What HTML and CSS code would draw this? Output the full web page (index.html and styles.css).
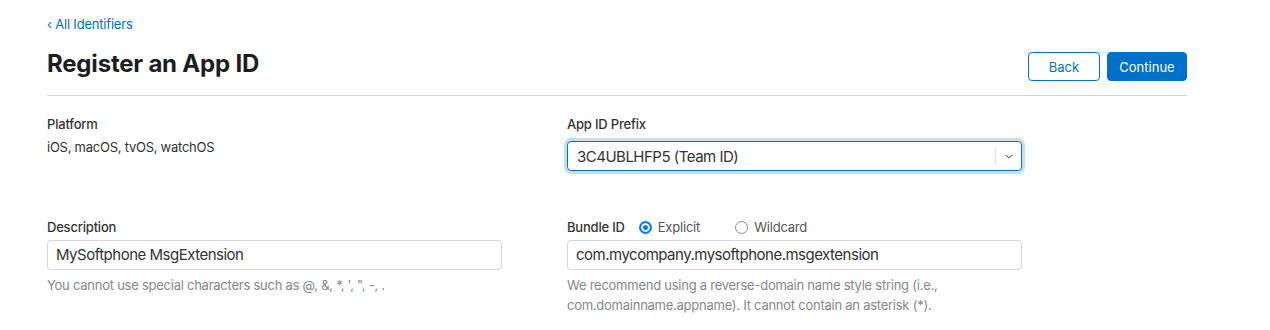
FILE: index.html
```html
<!DOCTYPE html>
<html lang="en">
  <head>
    <meta charset="UTF-8" />
    <meta name="viewport" content="width=device-width, initial-scale=1.0" />
    <title>Register an App ID</title>
    <link rel="stylesheet" href="styles.css">
  </head>
  <body>
    <div class="page">
      <a class="breadcrumb" href="#">&lsaquo; All Identifiers</a>

      <div class="header">
        <h1>Register an App ID</h1>
        <div class="actions">
          <button class="btn btn-secondary">Back</button>
          <button class="btn btn-primary">Continue</button>
        </div>
      </div>

      <div class="form">
        <div class="field">
          <div class="label">Platform</div>
          <div class="value">iOS, macOS, tvOS, watchOS</div>
        </div>
        <div class="field">
          <div class="label">App ID Prefix</div>
          <div class="select">
            <span class="select-text">3C4UBLHFP5 (Team ID)</span>
            <span class="select-sep"></span>
            <svg class="select-arrow" width="8" height="5" viewBox="0 0 8 5">
              <path d="M0.6 0.8 L4 4 L7.4 0.8" fill="none" stroke="#777" stroke-width="1.1"/>
            </svg>
          </div>
        </div>

        <div class="field row2">
          <div class="label">Description</div>
          <div class="input">MySoftphone MsgExtension</div>
          <div class="help">You cannot use special characters such as @, &amp;, *, ', ", -, .</div>
        </div>
        <div class="field row2">
          <div class="label-row">
            <span class="label">Bundle ID</span>
            <label class="radio"><span class="dot checked"></span>Explicit</label>
            <label class="radio"><span class="dot"></span>Wildcard</label>
          </div>
          <div class="input">com.mycompany.mysoftphone.msgextension</div>
          <div class="help">We recommend using a reverse-domain name style string (i.e.,<br>com.domainname.appname). It cannot contain an asterisk (*).</div>
        </div>
      </div>
    </div>
  </body>
</html>
```

FILE: styles.css
```css
body {
  margin: 0;
  padding: 0;
  background-color: #fff;
  font-family: Inter, "Liberation Sans", Arial, sans-serif;
  color: #333;
}

.page {
  width: 1140px;
  padding: 14px 0 0 47px;
}

.breadcrumb {
  display: block;
  font-size: 13px;
  line-height: 20px;
  letter-spacing: -0.2px;
  color: #0070c9;
  text-decoration: none;
}

.header {
  display: flex;
  justify-content: space-between;
  align-items: flex-start;
  margin-top: 14px;
  padding: 4px 0 14px;
  border-bottom: 1px solid #d6d6d6;
}

h1 {
  margin: 0;
  margin-top: -3px;
  font-size: 24px;
  line-height: 30px;
  font-weight: 700;
  letter-spacing: -0.2px;
  color: #1d1d1f;
}

.actions {
  display: flex;
  gap: 7px;
}

.btn {
  height: 29px;
  padding: 0;
  font-family: inherit;
  font-size: 13px;
  border-radius: 4px;
  cursor: pointer;
}

.btn-secondary {
  width: 72px;
  background-color: #fff;
  color: #0070c9;
  border: 1px solid #0070c9;
}

.btn-primary {
  width: 80px;
  background-color: #0070c9;
  color: #fff;
  border: 1px solid #0070c9;
}

.form {
  display: grid;
  grid-template-columns: 520px 1fr;
  row-gap: 46px;
  padding-top: 18px;
}

.label {
  font-size: 13px;
  line-height: 20px;
  font-weight: 500;
  letter-spacing: -0.2px;
  color: #333;
}

.value {
  margin-top: 3px;
  font-size: 13px;
  line-height: 20px;
  letter-spacing: -0.25px;
  color: #333;
}

.select {
  display: flex;
  align-items: center;
  width: 455px;
  height: 30px;
  margin-top: 7px;
  box-sizing: border-box;
  padding: 0 8px 0 9px;
  border: 1px solid #0070c9;
  border-radius: 4px;
  box-shadow: 0 0 0 3px #c6dff5;
}

.select-text {
  flex: 1;
  font-size: 15px;
  letter-spacing: -0.5px;
}

.select-sep {
  width: 1px;
  height: 16px;
  background-color: #e0e0e0;
  margin-right: 9px;
}

.label-row {
  display: flex;
  align-items: center;
  height: 20px;
}

.label-row .label {
  margin-right: 14px;
}

.radio {
  display: flex;
  align-items: center;
  font-size: 13px;
  letter-spacing: -0.2px;
  color: #555;
  margin-right: 35px;
}

.dot {
  width: 13px;
  height: 13px;
  box-sizing: border-box;
  border: 1px solid #8a8a8a;
  border-radius: 50%;
  background-color: #fff;
  margin-right: 6px;
}

.dot.checked {
  border: 2px solid #0a7cff;
  background-color: #0a7cff;
  box-shadow: inset 0 0 0 2px #fff;
}

.input {
  width: 455px;
  height: 30px;
  margin-top: 3px;
  box-sizing: border-box;
  padding: 0 8px;
  border: 1px solid #d6d6d6;
  border-radius: 4px;
  font-size: 15px;
  line-height: 28px;
  letter-spacing: -0.5px;
  color: #333;
}

.help {
  margin-top: 5px;
  font-size: 13px;
  line-height: 20px;
  letter-spacing: -0.25px;
  color: #888;
}
```
